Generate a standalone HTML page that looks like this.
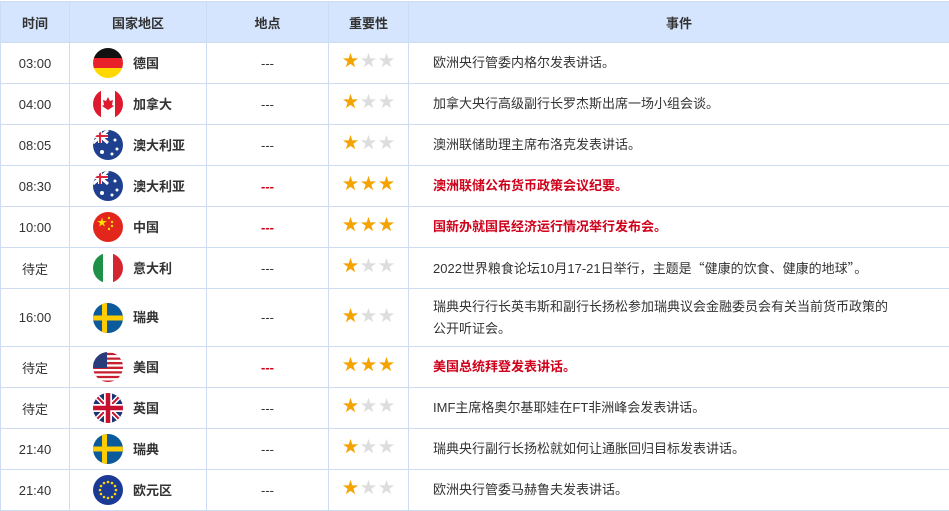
<!DOCTYPE html><html><head><meta charset="utf-8"><style>
body{margin:0;background:#fff;font-family:"Liberation Sans","Noto Sans CJK SC",sans-serif;font-size:13px;color:#333}
table{border-collapse:collapse;table-layout:fixed;width:950px;position:absolute;left:0;top:1px}
td,th{border:1px solid #cddcf3;padding:0;text-align:center}
th{background:#d5e5fd;height:40px;font-weight:bold;font-size:13px;color:#333}
td{height:40px}
tr.t td{height:57px}
.c{text-align:left;padding-left:23px}
.c svg{vertical-align:middle;margin-right:10px}
.c span{vertical-align:middle;font-weight:bold;position:relative;top:-1px}
.e{text-align:left;padding-left:24px;padding-right:55px;line-height:22px}
.r{color:#d0021b;font-weight:bold}
.s{font-size:16px;letter-spacing:2px;color:#ddd;line-height:10px;text-indent:2px}
.s i{font-style:normal;position:relative;top:-1px}
.s b{color:#f5a300;font-weight:normal}
</style></head><body>
<svg width="0" height="0" style="position:absolute"><defs><clipPath id="cc"><circle cx="15" cy="15" r="15"/></clipPath></defs></svg>
<table>
<colgroup><col style="width:69px"><col style="width:137px"><col style="width:122px"><col style="width:80px"><col></colgroup>
<tr><th>时间</th><th>国家地区</th><th>地点</th><th>重要性</th><th>事件</th></tr>
<tr><td>03:00</td><td class="c"><svg width="30" height="30"><g clip-path="url(#cc)"><rect width="30" height="10" fill="#111"/><rect y="10" width="30" height="10" fill="#e8202a"/><rect y="20" width="30" height="10" fill="#ffd800"/></g></svg><span>德国</span></td><td>---</td><td class="s"><i><b>★</b>★★</i></td><td class="e">欧洲央行管委内格尔发表讲话。</td></tr>
<tr><td>04:00</td><td class="c"><svg width="30" height="30"><g clip-path="url(#cc)"><rect width="30" height="30" fill="#fff"/><rect width="8" height="30" fill="#e01a2e"/><rect x="22" width="8" height="30" fill="#e01a2e"/><path d="M15 8l2 4 3-1-1 5 2 1-6 4-6-4 2-1-1-5 3 1z" fill="#e01a2e"/></g></svg><span>加拿大</span></td><td>---</td><td class="s"><i><b>★</b>★★</i></td><td class="e">加拿大央行高级副行长罗杰斯出席一场小组会谈。</td></tr>
<tr><td>08:05</td><td class="c"><svg width="30" height="30"><g clip-path="url(#cc)"><rect width="30" height="30" fill="#1f3f8f"/><path d="M0 0L15 13M15 0L0 13" stroke="#fff" stroke-width="3"/><path d="M7 0v13M0 6h15" stroke="#fff" stroke-width="4"/><path d="M7 0v13M0 6h15" stroke="#e2243a" stroke-width="2"/><circle cx="22" cy="10" r="1.5" fill="#fff"/><circle cx="24" cy="19" r="1.5" fill="#fff"/><circle cx="9" cy="22" r="2" fill="#fff"/><circle cx="19" cy="24" r="1.5" fill="#fff"/></g></svg><span>澳大利亚</span></td><td>---</td><td class="s"><i><b>★</b>★★</i></td><td class="e">澳洲联储助理主席布洛克发表讲话。</td></tr>
<tr><td>08:30</td><td class="c"><svg width="30" height="30"><g clip-path="url(#cc)"><rect width="30" height="30" fill="#1f3f8f"/><path d="M0 0L15 13M15 0L0 13" stroke="#fff" stroke-width="3"/><path d="M7 0v13M0 6h15" stroke="#fff" stroke-width="4"/><path d="M7 0v13M0 6h15" stroke="#e2243a" stroke-width="2"/><circle cx="22" cy="10" r="1.5" fill="#fff"/><circle cx="24" cy="19" r="1.5" fill="#fff"/><circle cx="9" cy="22" r="2" fill="#fff"/><circle cx="19" cy="24" r="1.5" fill="#fff"/></g></svg><span>澳大利亚</span></td><td class="r">---</td><td class="s"><i><b>★★★</b></i></td><td class="e r">澳洲联储公布货币政策会议纪要。</td></tr>
<tr><td>10:00</td><td class="c"><svg width="30" height="30"><g clip-path="url(#cc)"><rect width="30" height="30" fill="#e2261c"/><text x="4" y="14" font-size="10" fill="#ffde00">★</text><circle cx="16" cy="6" r="1.2" fill="#ffde00"/><circle cx="19" cy="10" r="1.2" fill="#ffde00"/><circle cx="19" cy="14" r="1.2" fill="#ffde00"/><circle cx="16" cy="17" r="1.2" fill="#ffde00"/></g></svg><span>中国</span></td><td class="r">---</td><td class="s"><i><b>★★★</b></i></td><td class="e r">国新办就国民经济运行情况举行发布会。</td></tr>
<tr><td>待定</td><td class="c"><svg width="30" height="30"><g clip-path="url(#cc)"><rect width="10" height="30" fill="#1e9146"/><rect x="10" width="10" height="30" fill="#fff"/><rect x="20" width="10" height="30" fill="#d5262f"/></g></svg><span>意大利</span></td><td>---</td><td class="s"><i><b>★</b>★★</i></td><td class="e">2022世界粮食论坛10月17-21日举行，主题是<span style="font-family:'Noto Sans CJK SC'">“</span>健康的饮食、健康的地球<span style="font-family:'Noto Sans CJK SC'">”</span>。</td></tr>
<tr class="t"><td>16:00</td><td class="c"><svg width="30" height="30"><g clip-path="url(#cc)"><rect width="30" height="30" fill="#0a5a9c"/><rect x="9" width="5" height="30" fill="#fecc02"/><rect y="12.5" width="30" height="5" fill="#fecc02"/></g></svg><span>瑞典</span></td><td>---</td><td class="s"><i><b>★</b>★★</i></td><td class="e">瑞典央行行长英韦斯和副行长扬松参加瑞典议会金融委员会有关当前货币政策的公开听证会。</td></tr>
<tr><td>待定</td><td class="c"><svg width="30" height="30"><g clip-path="url(#cc)"><rect width="30" height="30" fill="#fff"/><path d="M0 2h30M0 6.6h30M0 11.2h30M0 15.8h30M0 20.4h30M0 25h30M0 29.6h30" stroke="#c8202f" stroke-width="2.3"/><rect width="14" height="16" fill="#283d7a"/></g></svg><span>美国</span></td><td class="r">---</td><td class="s"><i><b>★★★</b></i></td><td class="e r">美国总统拜登发表讲话。</td></tr>
<tr><td>待定</td><td class="c"><svg width="30" height="30"><g clip-path="url(#cc)"><rect width="30" height="30" fill="#1f3372"/><path d="M0 0L30 30M30 0L0 30" stroke="#fff" stroke-width="5"/><path d="M0 0L30 30M30 0L0 30" stroke="#c8102e" stroke-width="2"/><path d="M15 0v30M0 15h30" stroke="#fff" stroke-width="8"/><path d="M15 0v30M0 15h30" stroke="#c8102e" stroke-width="4.5"/></g></svg><span>英国</span></td><td>---</td><td class="s"><i><b>★</b>★★</i></td><td class="e">IMF主席格奥尔基耶娃在FT非洲峰会发表讲话。</td></tr>
<tr><td>21:40</td><td class="c"><svg width="30" height="30"><g clip-path="url(#cc)"><rect width="30" height="30" fill="#0a5a9c"/><rect x="9" width="5" height="30" fill="#fecc02"/><rect y="12.5" width="30" height="5" fill="#fecc02"/></g></svg><span>瑞典</span></td><td>---</td><td class="s"><i><b>★</b>★★</i></td><td class="e">瑞典央行副行长扬松就如何让通胀回归目标发表讲话。</td></tr>
<tr><td>21:40</td><td class="c"><svg width="30" height="30"><g clip-path="url(#cc)"><rect width="30" height="30" fill="#1b3a94"/><g fill="#ffd500"><circle cx="15" cy="7" r="1.3"/><circle cx="19" cy="8" r="1.3"/><circle cx="22" cy="11" r="1.3"/><circle cx="23" cy="15" r="1.3"/><circle cx="22" cy="19" r="1.3"/><circle cx="19" cy="22" r="1.3"/><circle cx="15" cy="23" r="1.3"/><circle cx="11" cy="22" r="1.3"/><circle cx="8" cy="19" r="1.3"/><circle cx="7" cy="15" r="1.3"/><circle cx="8" cy="11" r="1.3"/><circle cx="11" cy="8" r="1.3"/></g></g></svg><span>欧元区</span></td><td>---</td><td class="s"><i><b>★</b>★★</i></td><td class="e">欧洲央行管委马赫鲁夫发表讲话。</td></tr>
</table>
</body></html>
